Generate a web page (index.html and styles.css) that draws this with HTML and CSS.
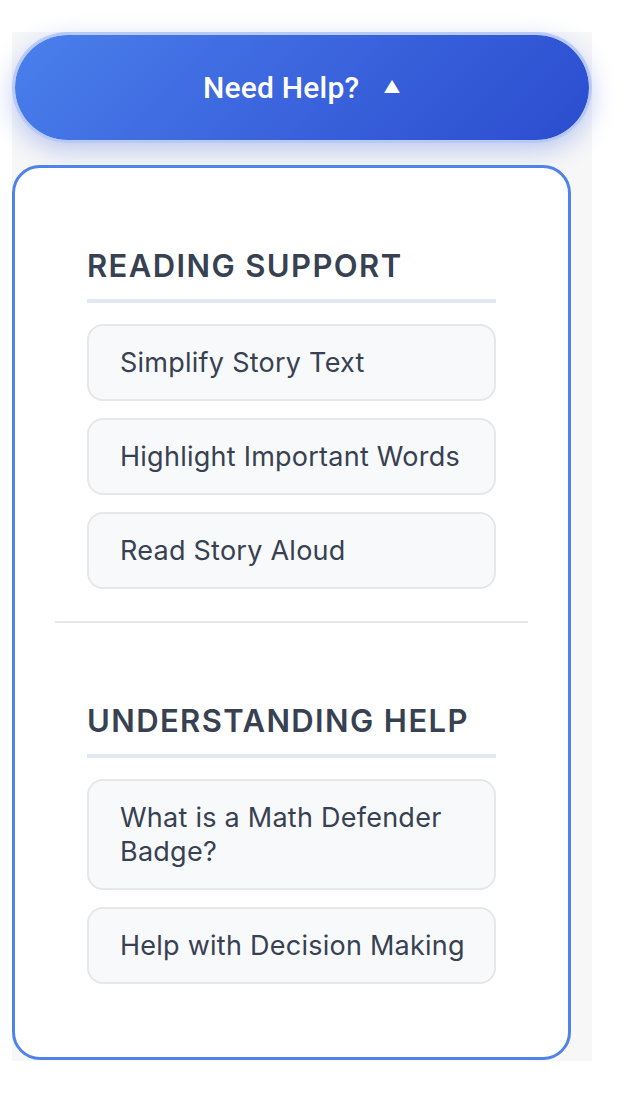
FILE: index.html
```html
<!DOCTYPE html>
<html lang="en">
<head>
<meta charset="utf-8">
<title>Need Help</title>
<link rel="stylesheet" href="styles.css">
</head>
<body>
<div class="help-widget">
  <button class="help-toggle" type="button">
    <span>Need Help?</span>
    <span class="arrow">▲</span>
  </button>
  <div class="help-panel">
    <section class="help-section">
      <h3 class="section-title">READING SUPPORT</h3>
      <div class="option-list">
        <button class="option" type="button">Simplify Story Text</button>
        <button class="option" type="button">Highlight Important Words</button>
        <button class="option" type="button">Read Story Aloud</button>
      </div>
    </section>
    <hr class="divider">
    <section class="help-section">
      <h3 class="section-title">UNDERSTANDING HELP</h3>
      <div class="option-list">
        <button class="option" type="button">What is a Math Defender Badge?</button>
        <button class="option" type="button">Help with Decision Making</button>
      </div>
    </section>
  </div>
</div>
</body>
</html>
```
FILE: styles.css
```css
html, body {
  margin: 0;
  padding: 0;
  background: #ffffff;
}
body {
  padding: 32px 0 0 12px;
  font-family: Inter, "Noto Sans", sans-serif;
}
.help-widget {
  width: 580px;
  background: #f7f7f8;
  display: flex;
  flex-direction: column;
  gap: 22px;
  padding-bottom: 1px;
}
.help-toggle {
  width: 580px;
  height: 111px;
  border-radius: 56px;
  border: 3px solid rgba(140, 170, 245, 0.6);
  background: linear-gradient(135deg, #4a80ec 0%, #3b64dd 50%, #2b4dcf 100%);
  background-clip: padding-box;
  box-shadow: 0 8px 24px rgba(59, 98, 220, 0.3);
  color: #ffffff;
  font-family: Roboto, Inter, sans-serif;
  font-weight: 500;
  font-size: 30px;
  letter-spacing: 0.2px;
  display: flex;
  align-items: center;
  justify-content: center;
  gap: 24px;
  padding: 0;
  cursor: pointer;
}
.help-toggle .arrow {
  font-size: 17px;
  line-height: 1;
}
.help-panel {
  width: 559px;
  box-sizing: border-box;
  background: #ffffff;
  border: 3px solid #4f83ea;
  border-radius: 28px;
  padding: 40px 40px 41px;
}
.help-section {
  padding: 32px;
}
.section-title {
  margin: 0;
  font-size: 31px;
  line-height: 51px;
  font-weight: 600;
  letter-spacing: 1.4px;
  color: #374151;
  padding-bottom: 8px;
  border-bottom: 4px solid #e2e8f0;
}
.option-list {
  display: flex;
  flex-direction: column;
  gap: 17px;
  margin-top: 21px;
}
.option {
  display: block;
  width: 100%;
  text-align: left;
  background: #f8f9fb;
  border: 2px solid #e5e7eb;
  border-radius: 16px;
  padding: 20px 16px 19px 31px;
  font-family: Inter, "Noto Sans", sans-serif;
  font-size: 27px;
  letter-spacing: 0.25px;
  line-height: 34px;
  color: #374151;
  cursor: pointer;
}
.divider {
  border: 0;
  border-top: 2px solid #e5e7eb;
  margin: 0 0 40px;
}
```
